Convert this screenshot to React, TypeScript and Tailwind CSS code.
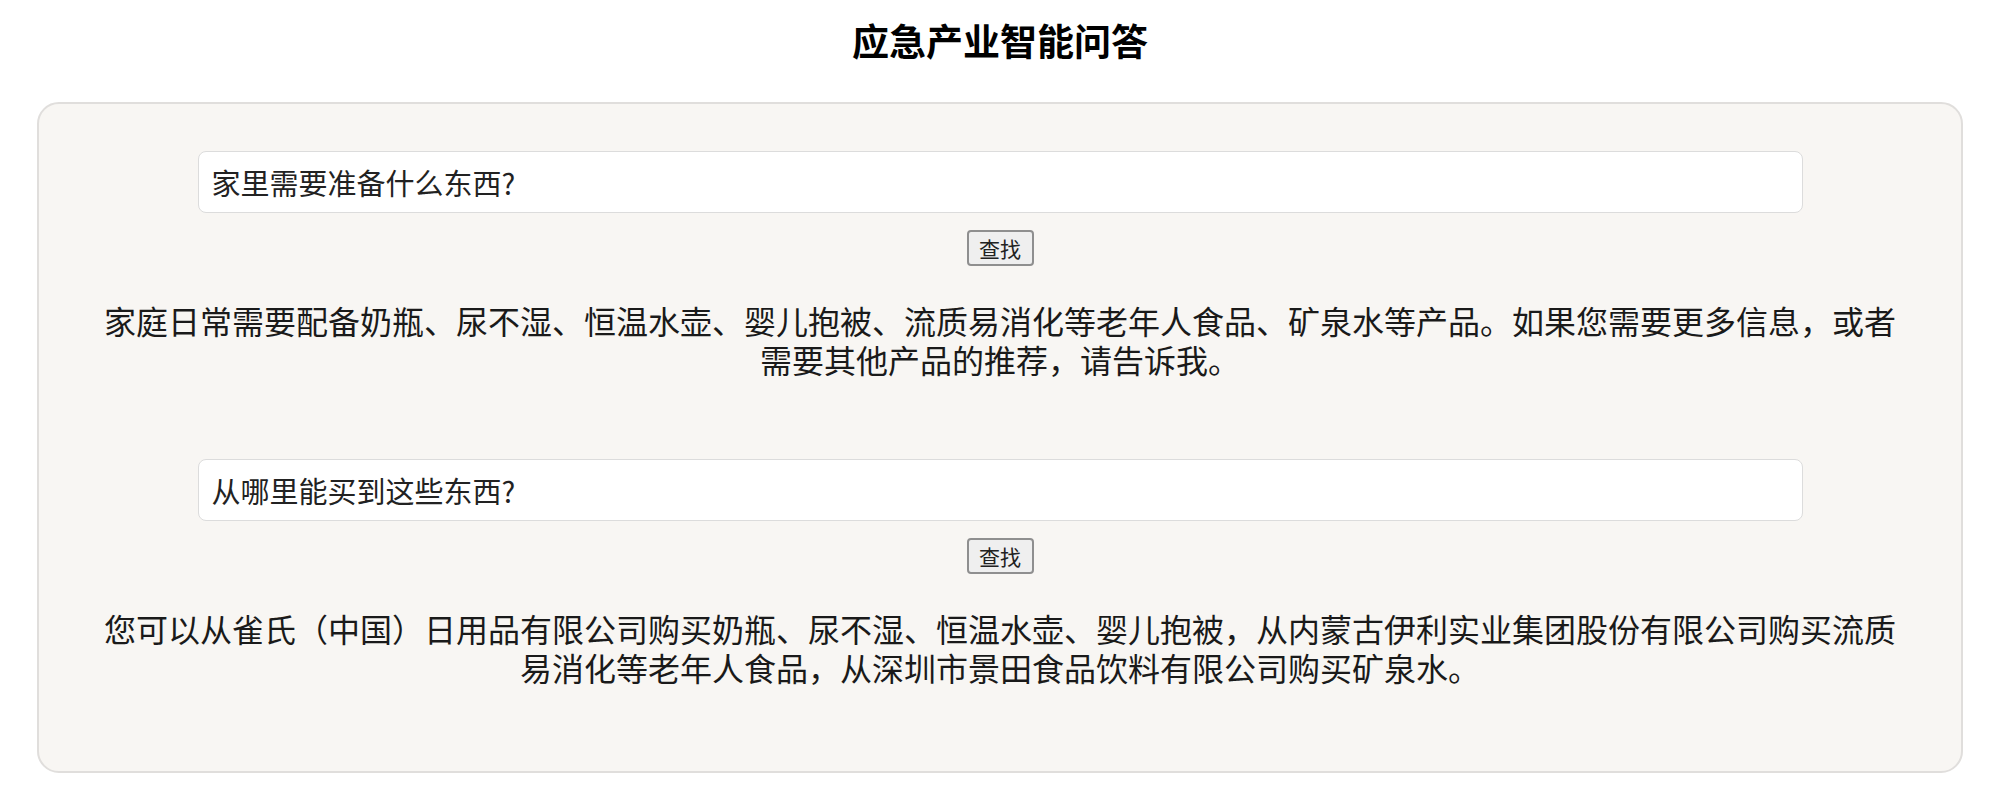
import React, { useState } from "react";

type QA = { id: number; question: string; answer: string };

const initialItems: QA[] = [
  {
    id: 1,
    question: "家里需要准备什么东西?",
    answer:
      "家庭日常需要配备奶瓶、尿不湿、恒温水壶、婴儿抱被、流质易消化等老年人食品、矿泉水等产品。如果您需要更多信息，或者需要其他产品的推荐，请告诉我。",
  },
  {
    id: 2,
    question: "从哪里能买到这些东西?",
    answer:
      "您可以从雀氏（中国）日用品有限公司购买奶瓶、尿不湿、恒温水壶、婴儿抱被，从内蒙古伊利实业集团股份有限公司购买流质易消化等老年人食品，从深圳市景田食品饮料有限公司购买矿泉水。",
  },
];

function QuestionBlock({ item }: { item: QA }) {
  const [question, setQuestion] = useState(item.question);

  return (
    <div className="flex w-full flex-col items-center">
      <input
        value={question}
        onChange={(e) => setQuestion(e.target.value)}
        className="h-[62px] w-[1605px] rounded-[8px] border border-[#dcdcdc] bg-white px-[13px] text-[29px] text-[#222] outline-none"
      />
      <button className="mt-[17px] h-[36px] w-[67px] rounded-[4px] border-2 border-[#8f8f8f] bg-[#efefef] text-[21px] leading-none text-[#222]">
        查找
      </button>
      <p className="mt-[35px] w-full px-[57px] text-center text-[32px] leading-[39px] text-[#1a1a1a]">
        {item.answer}
      </p>
    </div>
  );
}

export default function App() {
  const [items] = useState<QA[]>(initialItems);

  return (
    <div
      className="min-h-screen w-full bg-white"
      style={{ fontFamily: '"Noto Sans CJK SC", "Noto Sans", sans-serif' }}
    >
      <h1 className="pt-[18px] text-center text-[37px] font-bold leading-[44px] text-black">
        应急产业智能问答
      </h1>
      <div className="mx-[37px] mt-[40px] flex flex-col gap-[80px] rounded-[22px] border-2 border-[#e0dedc] bg-[#f8f6f3] pt-[47px] pb-[84px]">
        {items.map((item) => (
          <QuestionBlock key={item.id} item={item} />
        ))}
      </div>
    </div>
  );
}
